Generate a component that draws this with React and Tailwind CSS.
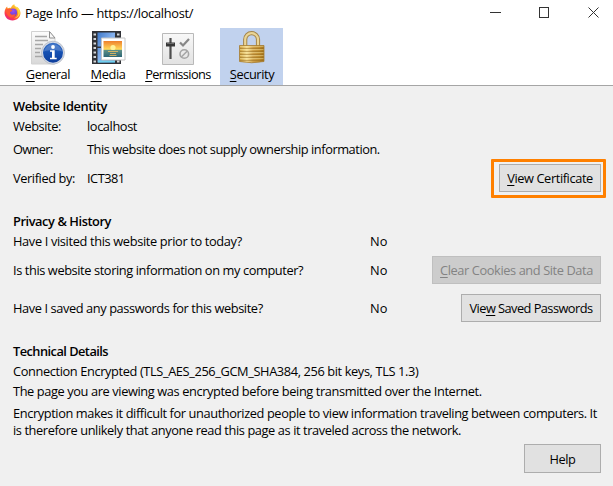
import React from "react";

function Firefox() {
  return (
    <svg width="17" height="17" viewBox="0 0 32 32">
      <defs>
        <linearGradient id="fox" x1="0.85" y1="0" x2="0.25" y2="1">
          <stop offset="0" stopColor="#ffe340" />
          <stop offset="0.4" stopColor="#ff9a1f" />
          <stop offset="0.75" stopColor="#ff3d47" />
          <stop offset="1" stopColor="#e8208c" />
        </linearGradient>
        <radialGradient id="globe" cx="0.5" cy="0.3" r="0.8">
          <stop offset="0" stopColor="#a04ff0" />
          <stop offset="1" stopColor="#5a3ad0" />
        </radialGradient>
      </defs>
      <path d="M16 31C7 31 1 24.500 1 16.500 1 11 3.500 6.500 6 4.500c0 2 .6 3 1.500 3.800C9 7 11.500 7 13 7.500 14 4 17 1.500 19.500.5c0 4 2.500 5 4.500 7 0-1 0-2-.5-3C28 7.500 31 12.500 31 17c0 8-6.500 14-15 14z" fill="url(#fox)" />
      <circle cx="17" cy="16" r="7.500" fill="url(#globe)" />
      <path d="M4 11c3-3 7-2.500 9 0 1.500.2 2 .3 2.500 1-.5 1.500-3 2-4 3-.5 3 1.500 5 4 5 2.500 0 4-1 6.500-.5-1 4-5 6.500-9 6C8 24.500 4 19 4 11z" fill="#ff5a36" />
      <path d="M20 3c2 5 7 7 7 14 0 5-4 9-9 10 8 0 12-5 12-11 0-5-3-9-6-10z" fill="#ffd83c" />
    </svg>
  );
}

function GeneralIcon() {
  return (
    <svg width="36" height="36" viewBox="0 0 36 36">
      <defs>
        <linearGradient id="paper" x1="0" y1="0" x2="0" y2="1">
          <stop offset="0" stopColor="#fdfdfd" />
          <stop offset="1" stopColor="#d8d8d8" />
        </linearGradient>
        <linearGradient id="info" x1="0" y1="0" x2="0" y2="1">
          <stop offset="0" stopColor="#386fc5" />
          <stop offset="0.5" stopColor="#1550b2" />
          <stop offset="1" stopColor="#0d3d9b" />
        </linearGradient>
      </defs>
      <path d="M1.500 1.500h17.500l6 6.500v26H1.500z" fill="url(#paper)" stroke="#d2d2d2" />
      <path d="M5 6.500h12M5 10.500h13M5 14.500h8M5 18.500h6M5 22.500h5M5 26.500h7" stroke="#a7a7a7" strokeWidth="1.500" />
      <path d="M19.500 1.500v6.500h5.500z" fill="#f8f8f8" stroke="#8f8f8f" />
      <circle cx="23" cy="22.700" r="11.500" fill="#d3d9e4" stroke="#a4abb8" strokeWidth=".6" />
      <circle cx="23" cy="22.700" r="10" fill="url(#info)" />
      <path d="M14 21.500a9.200 9.200 0 0 1 18 0c-5-2-13-2-18 0z" fill="#799dda" opacity=".45" />
      <circle cx="23" cy="17" r="1.900" fill="white" />
      <path d="M20 20.300h4.700v7.500h2v1.500h-6.700v-1.500h2v-6h-2z" fill="white" />
    </svg>
  );
}

function MediaIcon() {
  return (
    <svg width="36" height="36" viewBox="0 0 36 36">
      <defs>
        <linearGradient id="frame" x1="0" y1="0" x2="1" y2="1">
          <stop offset="0" stopColor="#3f78c8" />
          <stop offset="0.5" stopColor="#86b2ee" />
          <stop offset="1" stopColor="#2f68b6" />
        </linearGradient>
        <linearGradient id="sunset" x1="0" y1="0" x2="0" y2="1">
          <stop offset="0" stopColor="#ee7f2c" />
          <stop offset="0.52" stopColor="#ffd95a" />
          <stop offset="0.58" stopColor="#5f8f86" />
          <stop offset="1" stopColor="#2d6676" />
        </linearGradient>
      </defs>
      <path d="M2 1h29v33H2z" fill="#303237" />
      <path d="M7.500 2.500h17.500v14H7.500zM7.500 18h17.500v14.500H7.500z" fill="url(#frame)" />
      <path d="M8 30.500h17v2H8z" fill="#6fd0ee" />
      <path d="M3.500 4.500H6M3.500 9H6M3.500 13.500H6M3.500 18H6M3.500 22.500H6M3.500 27H6M3.500 31.500H6M27 4.500h2.500M27 31.500h2.500" stroke="#d4d6d9" strokeWidth="2" />
      <path d="M11.500 8h23.500v22H11.500z" fill="#fff" stroke="#c4c4c4" />
      <path d="M13.500 11h18.500v16H13.500z" fill="url(#sunset)" />
      <circle cx="23" cy="17.500" r="2.600" fill="#fff29a" />
      <path d="M18 21.500h10M20 23.500h6M19.500 25.500h7" stroke="#f0bf62" strokeWidth=".8" />
    </svg>
  );
}

function PermissionsIcon() {
  return (
    <svg width="36" height="36" viewBox="0 0 36 36">
      <defs>
        <linearGradient id="panel" x1="0" y1="0" x2="0" y2="1">
          <stop offset="0" stopColor="#f8f8f8" />
          <stop offset="1" stopColor="#e2e2e2" />
        </linearGradient>
      </defs>
      <path d="M2.500 3.500h31v31h-31z" fill="url(#panel)" stroke="#b9b9b9" />
      <path d="M10.500 8v21" stroke="#4d4d4d" strokeWidth="2.200" />
      <path d="M6 12.500h9v4H6z" fill="#383838" />
      <path d="M7 13.500h7" stroke="#6b6b6b" />
      <path d="M20 12.500l3 3 6-6.500" fill="none" stroke="#878787" strokeWidth="2.200" />
      <circle cx="24.300" cy="24" r="4.300" fill="none" stroke="#a5a5a5" strokeWidth="1.600" />
      <path d="M21.300 27l6-6" stroke="#a5a5a5" strokeWidth="1.600" />
    </svg>
  );
}

function LockIcon() {
  return (
    <svg width="36" height="36" viewBox="0 0 36 36">
      <defs>
        <linearGradient id="brass" x1="0" y1="0" x2="1" y2="0">
          <stop offset="0" stopColor="#c99b3a" />
          <stop offset="0.3" stopColor="#f4dc92" />
          <stop offset="0.55" stopColor="#cfa14a" />
          <stop offset="0.8" stopColor="#c08f30" />
          <stop offset="1" stopColor="#a3731b" />
        </linearGradient>
      </defs>
      <path d="M11.200 17v-7.500a6.400 6.300 0 0 1 12.800 0V17" fill="none" stroke="#a3854a" strokeWidth="4.200" />
      <path d="M11.200 17v-7.500a6.400 6.300 0 0 1 12.800 0V17" fill="none" stroke="#ead596" strokeWidth="2.200" />
      <path d="M5.500 15.500h24.500v16q-12.250 2.500-24.500 0z" fill="url(#brass)" stroke="#a67e35" strokeWidth=".8" />
      <path d="M6 18.500h23.500M6 21.500h23.500M6 24.500h23.500M6 27.500h23.500M6 30.500h23.500" stroke="#94691f" strokeWidth=".8" opacity=".6" />
      <path d="M6 16.500h23.500M6 19.500h23.500M6 22.500h23.500M6 25.500h23.500M6 28.500h23.500" stroke="#fff0b0" strokeWidth=".8" opacity=".5" />
    </svg>
  );
}

function Key({ children }) {
  return <span className="underline decoration-1 underline-offset-2">{children}</span>;
}

function Tab({ icon, className, labelClass, children }) {
  return (
    <div className={"flex h-[57px] flex-col items-center pt-[2px] " + className}>
      {icon}
      <span className={"-mt-px h-[18px] leading-[18px] whitespace-nowrap " + labelClass}>{children}</span>
    </div>
  );
}

function Button({ className, children }) {
  return (
    <button className={"flex shrink-0 items-center justify-center border whitespace-nowrap " + className}>
      {children}
    </button>
  );
}

const normal = "border-[#adadad] bg-[#e1e1e1] text-black ";

export default function App() {
  return (
    <div className="flex h-[486px] w-[613px] flex-col overflow-hidden bg-[#f0f0f0] font-['Open_Sans','Noto_Sans',sans-serif] text-[12.8px] leading-[18px] text-black">
      <header className="h-[86px] shrink-0 border-b border-[#a5a5a5] bg-white">
        <div className="flex h-[28px] items-start pl-[4px]">
          <div className="pt-[4px]"><Firefox /></div>
          <span className="ml-[4px] pt-[4px] tracking-[-0.3px] whitespace-nowrap">Page Info — https://localhost/</span>
          <svg className="ml-auto" width="143" height="28" viewBox="0 0 143 28" fill="none" stroke="#333" shapeRendering="crispEdges">
            <path d="M20 12.500h11M69.500 7.500h9v10h-9z" />
            <path d="M118.500 7.500l10 10M128.500 7.500l-10 10" shapeRendering="auto" />
          </svg>
        </div>
        <nav className="flex pl-[17px]">
          <Tab icon={<GeneralIcon />} className="w-[62px]" labelClass="tracking-[-0.4px]"><Key>G</Key>eneral</Tab>
          <Tab icon={<MediaIcon />} className="w-[57px] pl-px" labelClass="tracking-[-0.4px]"><Key>M</Key>edia</Tab>
          <Tab icon={<PermissionsIcon />} className="w-[84px]" labelClass="tracking-[-0.6px]"><Key>P</Key>ermissions</Tab>
          <Tab icon={<LockIcon />} className="w-[63px] bg-[#c1d2ee] pl-px" labelClass="tracking-[-0.4px]"><Key>S</Key>ecurity</Tab>
        </nav>
      </header>

      <main className="flex flex-1 flex-col pr-[12px] pl-[13px]">
        <h2 className="mt-[11px] font-semibold tracking-[-0.43px]">Website Identity</h2>
        <div className="mt-[2px] flex"><span className="w-[74px] tracking-[-0.42px]">Website:</span><span className="tracking-[-0.4px]">localhost</span></div>
        <div className="mt-[5px] flex"><span className="w-[74px] tracking-[-0.65px]">Owner:</span><span className="tracking-[-0.44px]">This website does not supply ownership information.</span></div>
        <div className="mt-px -mr-[5px] flex h-[39px] items-center">
          <span className="w-[74px] pb-[2px] tracking-[-0.4px]">Verified by:</span><span className="pb-[2px] tracking-[-0.5px]">ICT381</span>
          <div className="ml-auto flex h-[39px] w-[115px] items-center justify-center rounded-[1px] border-[3px] border-[#ff8000] pb-px pl-[3px]">
            <Button className={normal + "h-[28px] w-[102px] tracking-[-0.4px]"}><span><Key>V</Key>iew Certificate</span></Button>
          </div>
        </div>

        <h2 className="mt-[14px] font-semibold tracking-[-0.42px]">Privacy &amp; History</h2>
        <div className="mt-[2px] flex"><span className="w-[357px] tracking-[-0.35px]">Have I visited this website prior to today?</span><span>No</span></div>
        <div className="mt-[6px] flex h-[28px] items-center">
          <span className="w-[357px] tracking-[-0.4px]">Is this website storing information on my computer?</span><span>No</span>
          <Button className="ml-auto h-[28px] w-[169px] border-[#bfbfbf] bg-[#cccccc] tracking-[-0.4px] text-[#838383]"><span><Key>C</Key>lear Cookies and Site Data</span></Button>
        </div>
        <div className="mt-[10px] flex h-[28px] items-center">
          <span className="w-[357px] tracking-[-0.4px]">Have I saved any passwords for this website?</span><span>No</span>
          <Button className={normal + "ml-auto h-[28px] w-[140px] tracking-[-0.55px]"}><span>Vie<Key>w</Key> Saved Passwords</span></Button>
        </div>

        <h2 className="mt-[20px] font-semibold tracking-[-0.53px]">Technical Details</h2>
        <p className="mt-[2px] tracking-[-0.38px] whitespace-nowrap">Connection Encrypted (TLS_AES_256_GCM_SHA384, 256 bit keys, TLS 1.3)</p>
        <p className="mt-[2px] tracking-[-0.39px] whitespace-nowrap">The page you are viewing was encrypted before being transmitted over the Internet.</p>
        <p className="mt-[5px] leading-[17px] tracking-[-0.4px] whitespace-nowrap">Encryption makes it difficult for unauthorized people to view information traveling between computers. It<br />is therefore unlikely that anyone read this page as it traveled across the network.</p>
        <Button className={normal + "mt-[5px] ml-auto h-[29px] w-[77px] tracking-[-0.4px]"}>Help</Button>
      </main>
    </div>
  );
}
